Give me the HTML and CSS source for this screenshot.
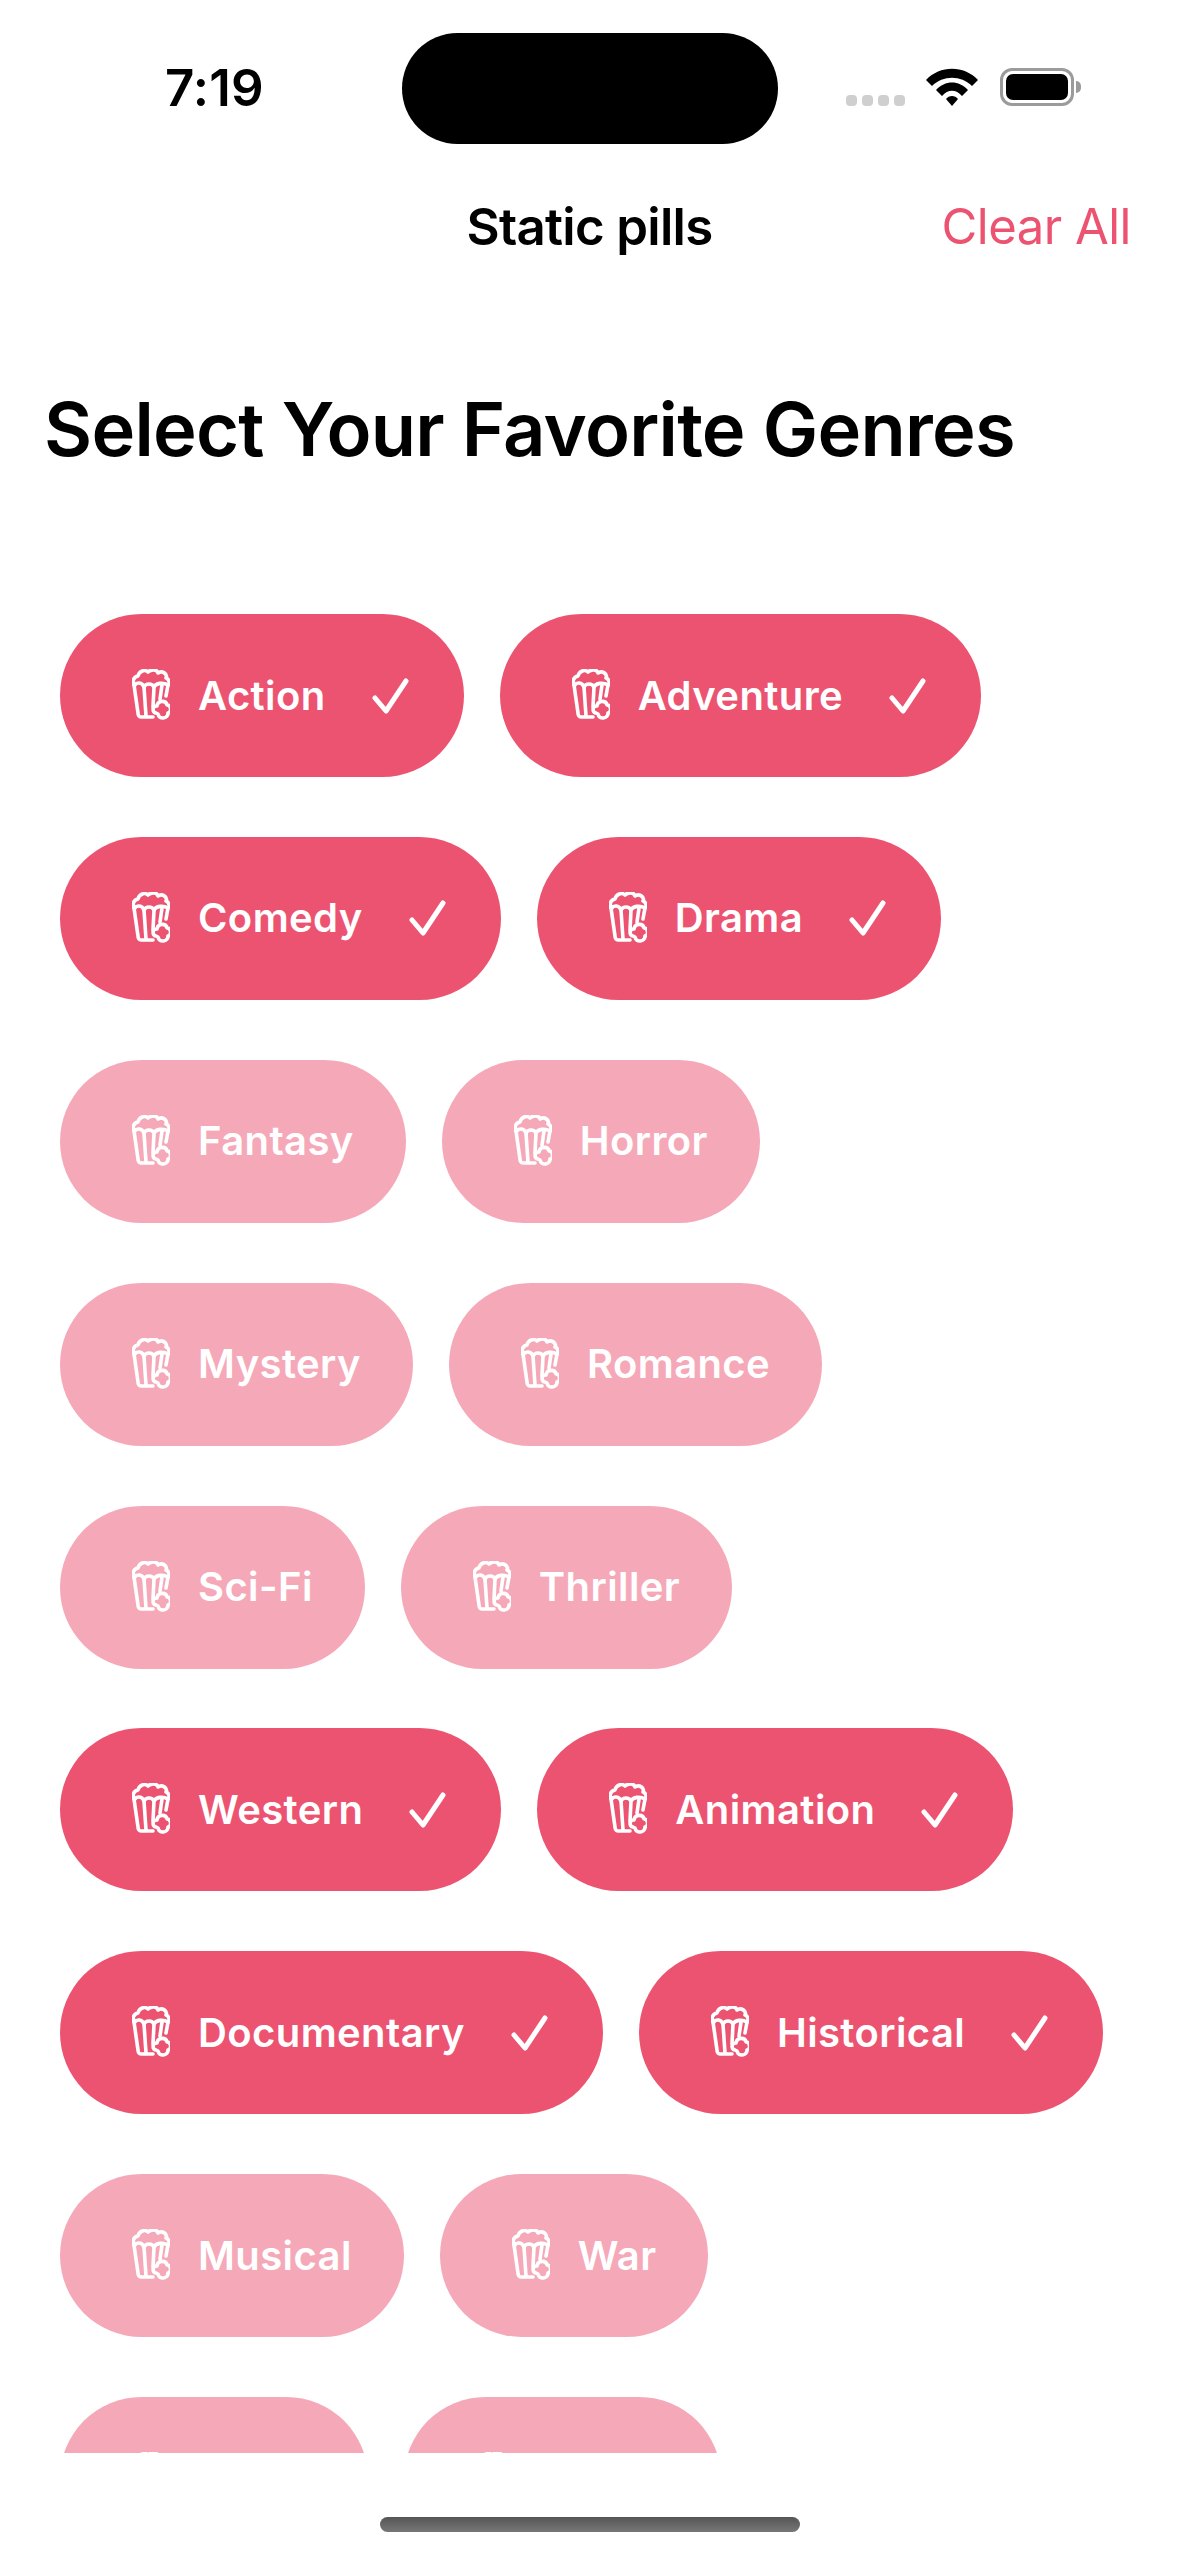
FILE: index.html
```html
<!DOCTYPE html>
<html lang="en">
<head>
  <meta charset="UTF-8">
  <meta name="viewport" content="width=device-width, initial-scale=1.0">
  <title>Static pills</title>
  <link rel="stylesheet" href="styles.css">
</head>
<body>

<svg class="sprites" width="0" height="0">
  <symbol id="popcorn" viewBox="0 0 38 53">
    <path d="M3 16 C0 13 1 8 6 7 C7 2 13 0 16 3 C19 0 25 0 26 4 C30 1 36 5 34 9 C37 10 38 14 36 16" />
    <path d="M2 16 C5 13 10 13 12 18 C14 14 20 14 22 18 C24 14 31 13 36 16" />
    <path d="M2 16 L6 44 C6 46 7 48 9 48 L21 48" />
    <path d="M36 16 L34 27" />
    <path d="M12 18 L14 47" />
    <path d="M22 18 L21 38" />
    <path d="M30 16 L28 30" />
    <path d="M24 44 C20 43 20 37 25 37 C26 31 34 31 35 36 C39 36 40 43 36 44 C36 50 27 51 26 45 Z" />
  </symbol>
  <symbol id="check" viewBox="0 0 37 36">
    <path d="M3 20 L14 33 L34 3" />
  </symbol>
</svg>

<div class="status-bar">
  <div class="status-time">7:19</div>
  <div class="island"></div>
  <div class="status-icons">
    <div class="signal"><span></span><span></span><span></span><span></span></div>
    <svg class="wifi" width="52" height="38" viewBox="0 0 52 38">
      <path d="M0 12 C14 -3 38 -3 52 12 L46 18 C35 7 17 7 6 18 Z" />
      <path d="M10 22 C19 12 33 12 42 22 L36 28 C30 21 22 21 16 28 Z" />
      <path d="M20 31 C23 27 29 27 32 31 L26 38 Z" />
    </svg>
    <div class="battery"><div class="battery-fill"></div></div>
    <div class="battery-cap"></div>
  </div>
</div>

<header class="nav">
  <div class="nav-title">Static pills</div>
  <div class="nav-action">Clear All</div>
</header>

<h1 class="heading">Select Your Favorite Genres</h1>

<div class="pill-list">
  <div class="pill-row">
    <div class="pill"><svg class="icon"><use href="#popcorn"/></svg><span class="label">Action</span><svg class="tick"><use href="#check"/></svg></div>
    <div class="pill"><svg class="icon"><use href="#popcorn"/></svg><span class="label">Adventure</span><svg class="tick"><use href="#check"/></svg></div>
  </div>
  <div class="pill-row">
    <div class="pill"><svg class="icon"><use href="#popcorn"/></svg><span class="label">Comedy</span><svg class="tick"><use href="#check"/></svg></div>
    <div class="pill"><svg class="icon"><use href="#popcorn"/></svg><span class="label">Drama</span><svg class="tick"><use href="#check"/></svg></div>
  </div>
  <div class="pill-row">
    <div class="pill off"><svg class="icon"><use href="#popcorn"/></svg><span class="label">Fantasy</span></div>
    <div class="pill off"><svg class="icon"><use href="#popcorn"/></svg><span class="label">Horror</span></div>
  </div>
  <div class="pill-row">
    <div class="pill off"><svg class="icon"><use href="#popcorn"/></svg><span class="label">Mystery</span></div>
    <div class="pill off"><svg class="icon"><use href="#popcorn"/></svg><span class="label">Romance</span></div>
  </div>
  <div class="pill-row">
    <div class="pill off"><svg class="icon"><use href="#popcorn"/></svg><span class="label">Sci-Fi</span></div>
    <div class="pill off"><svg class="icon"><use href="#popcorn"/></svg><span class="label">Thriller</span></div>
  </div>
  <div class="pill-row">
    <div class="pill"><svg class="icon"><use href="#popcorn"/></svg><span class="label">Western</span><svg class="tick"><use href="#check"/></svg></div>
    <div class="pill"><svg class="icon"><use href="#popcorn"/></svg><span class="label">Animation</span><svg class="tick"><use href="#check"/></svg></div>
  </div>
  <div class="pill-row">
    <div class="pill"><svg class="icon"><use href="#popcorn"/></svg><span class="label">Documentary</span><svg class="tick"><use href="#check"/></svg></div>
    <div class="pill"><svg class="icon"><use href="#popcorn"/></svg><span class="label">Historical</span><svg class="tick"><use href="#check"/></svg></div>
  </div>
  <div class="pill-row">
    <div class="pill off"><svg class="icon"><use href="#popcorn"/></svg><span class="label">Musical</span></div>
    <div class="pill off"><svg class="icon"><use href="#popcorn"/></svg><span class="label">War</span></div>
  </div>
  <div class="pill-row">
    <div class="pill off cut-a"><svg class="icon"><use href="#popcorn"/></svg></div>
    <div class="pill off cut-b"><svg class="icon"><use href="#popcorn"/></svg></div>
  </div>
</div>

<div class="home-area">
  <div class="home-bar"></div>
</div>

</body>
</html>
```

FILE: styles.css
```css
html, body {
  margin: 0;
  padding: 0;
}
body {
  width: 1179px;
  height: 2556px;
  overflow: hidden;
  background-color: #fff;
  color: #000;
  font-family: Inter, "Liberation Sans", sans-serif;
}
.sprites {
  display: block;
  height: 0;
}

/* status bar */
.status-bar {
  display: flex;
  height: 144px;
  padding-top: 33px;
  box-sizing: border-box;
}
.status-time {
  width: 402px;
  padding: 25px 0 0 165px;
  box-sizing: border-box;
  font-size: 51px;
  line-height: 60px;
  font-weight: 600;
  letter-spacing: 0.2px;
}
.island {
  width: 376px;
  height: 111px;
  border-radius: 56px;
  background-color: #000;
}
.status-icons {
  display: flex;
  align-items: flex-end;
  padding: 36px 0 0 68px;
  height: 37px;
}
.signal {
  display: flex;
  gap: 5px;
}
.signal span {
  width: 11px;
  height: 11px;
  border-radius: 4px;
  background-color: #cfcfcf;
}
.wifi {
  margin-left: 21px;
  fill: #000;
}
.battery {
  margin-left: 22px;
  width: 74px;
  height: 38px;
  box-sizing: border-box;
  border: 3px solid #9b9b9b;
  border-radius: 12px;
  padding: 3px;
}
.battery-fill {
  height: 100%;
  border-radius: 7px;
  background-color: #000;
}
.battery-cap {
  width: 5px;
  height: 12px;
  margin: 0 0 13px 2px;
  background-color: #9b9b9b;
  border-radius: 0 6px 6px 0;
}

/* nav */
.nav {
  display: flex;
  justify-content: center;
  position: relative;
  padding-top: 52px;
  box-sizing: border-box;
  height: 125px;
}
.nav-title {
  font-size: 51px;
  line-height: 62px;
  font-weight: 600;
  letter-spacing: -0.7px;
}
.nav-action {
  position: absolute;
  right: 48px;
  top: 52px;
  font-size: 49px;
  line-height: 62px;
  color: #ec5371;
  letter-spacing: -0.5px;
}

.heading {
  margin: 0;
  padding: 116px 0 0 44px;
  font-size: 74px;
  line-height: 88px;
  font-weight: 600;
  letter-spacing: -0.75px;
}

/* pills */
.pill-list {
  display: flex;
  flex-direction: column;
  gap: 59.9px;
  height: 1980px;
  box-sizing: border-box;
  padding: 141px 0 0 60px;
  overflow: hidden;
}
.pill-row {
  display: flex;
  gap: 36px;
  flex-shrink: 0;
}
.pill {
  display: flex;
  align-items: center;
  flex-shrink: 0;
  height: 163px;
  padding: 0 55px 0 72px;
  box-sizing: border-box;
  border-radius: 82px;
  background-color: #ec5371;
  color: #fff;
}
.pill.off {
  padding-right: 52px;
  background-color: #f5a9b8;
}
.pill.cut-a {
  width: 308px;
}
.pill.cut-b {
  width: 317px;
}
.icon {
  width: 38px;
  height: 53px;
  margin-right: 28px;
  flex-shrink: 0;
  fill: none;
  stroke: #fff;
  stroke-width: 3.6;
  stroke-linecap: round;
  stroke-linejoin: round;
}
.label {
  font-size: 40px;
  line-height: 50px;
  font-weight: 600;
  letter-spacing: 0.4px;
}
.tick {
  width: 37px;
  height: 36px;
  margin-left: 46px;
  fill: none;
  stroke: #fff;
  stroke-width: 5;
  stroke-linecap: round;
  stroke-linejoin: round;
}

/* home indicator */
.home-area {
  position: absolute;
  left: 0;
  right: 0;
  bottom: 0;
  height: 103px;
  background-color: #fff;
}
.home-bar {
  width: 420px;
  height: 15px;
  margin: 64px auto 0;
  border-radius: 8px;
  background: linear-gradient(#555, #777);
}
```
